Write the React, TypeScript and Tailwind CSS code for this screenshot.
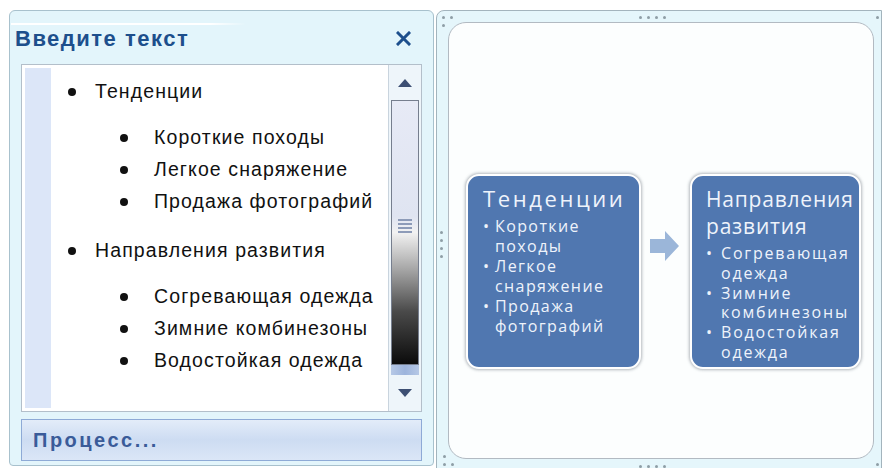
import type { ReactNode } from "react";

type Topic = { title: string; items: string[] };

const topics: Topic[] = [
  { title: "Тенденции", items: ["Короткие походы", "Легкое снаряжение", "Продажа фотографий"] },
  { title: "Направления развития", items: ["Согревающая одежда", "Зимние комбинезоны", "Водостойкая одежда"] },
];

const Dot = ({ className = "" }: { className?: string }) => (
  <span className={`absolute h-[3px] w-[3px] rounded-full bg-[#8e9ea6] ${className}`} />
);

const Bullet = () => <span className="h-[8px] w-[8px] shrink-0 rounded-full bg-[#111]" />;

const OutlineRow = ({ level, children }: { level: 0 | 1; children: ReactNode }) => (
  <div className={`flex h-[32px] items-center ${level === 0 ? "pl-[17px]" : "pl-[69px]"}`}>
    <Bullet />
    <span className={level === 0 ? "ml-[19px]" : "ml-[26px]"}>{children}</span>
  </div>
);

const ScrollBar = () => (
  <div className="flex w-[33px] shrink-0 flex-col border-l border-[#c9d4de] bg-[#eef5fa]">
    <div className="flex h-[35px] shrink-0 items-center justify-center">
      <svg width="14" height="8" viewBox="0 0 14 8">
        <path d="M0 8 L7 0 L14 8 Z" fill="#3d4f73" />
      </svg>
    </div>
    <div className="mx-[2px] flex h-[265px] shrink-0 flex-col items-center border border-[#767e8e] bg-[linear-gradient(to_bottom,#e7eaf6_0%,#dfe4f1_44%,#f2f2f2_50%,#a6a6a6_64%,#4a4a4a_80%,#0b0b0b_100%)]">
      <div className="mt-[118px] flex flex-col gap-[2px]">
        <span className="h-[2px] w-[14px] bg-[#8d9bb8]" />
        <span className="h-[2px] w-[14px] bg-[#8d9bb8]" />
        <span className="h-[2px] w-[14px] bg-[#8d9bb8]" />
        <span className="h-[2px] w-[14px] bg-[#8d9bb8]" />
      </div>
    </div>
    <div className="mx-[2px] h-[10px] shrink-0 bg-[linear-gradient(to_right,#b6c8e6,#9db4dc,#b6c8e6)]" />
    <div className="flex flex-1 items-center justify-center">
      <svg width="14" height="8" viewBox="0 0 14 8">
        <path d="M0 0 L14 0 L7 8 Z" fill="#3d4f73" />
      </svg>
    </div>
  </div>
);

const TextPane = () => (
  <div className="flex h-[456px] w-[425px] shrink-0 flex-col rounded-t-[6px] rounded-b-[4px] border border-[#a8c1cd] bg-[#e3f5fb]">
    <div className="relative flex h-[53px] shrink-0 items-center justify-between pl-[5px] pr-[22px] pt-[2px]">
      <span className="absolute left-[1px] top-[12px] h-[2px] w-[235px] bg-[linear-gradient(to_right,#ffffff_85%,rgba(255,255,255,0))]" />
      <span className="font-['Liberation_Sans',sans-serif] text-[22px] font-bold tracking-[1.5px] text-[#1d4f8c]">
        Введите текст
      </span>
      <svg width="15" height="15" viewBox="0 0 15 15">
        <path d="M2 2 L13 13 M13 2 L2 13" stroke="#1d4f8c" strokeWidth="3" strokeLinecap="square" />
      </svg>
    </div>
    <div className="mx-[11px] flex h-[348px] shrink-0 border border-[#b3bfca] bg-white">
      <div className="flex flex-1 p-[3px]">
        <div className="w-[26px] shrink-0 bg-[#dce6f8]" />
        <div className="flex-1 pt-[8px] font-['Liberation_Sans',sans-serif] text-[19.5px] tracking-[1.1px] text-[#111]">
          {topics.map((t, i) => (
            <div key={t.title} className={i === 0 ? "" : "mt-[17px]"}>
              <OutlineRow level={0}>{t.title}</OutlineRow>
              <div className="mt-[14px]">
                {t.items.map((item) => (
                  <OutlineRow key={item} level={1}>
                    {item}
                  </OutlineRow>
                ))}
              </div>
            </div>
          ))}
        </div>
      </div>
      <ScrollBar />
    </div>
    <div className="mx-[11px] mt-[7px] flex h-[42px] shrink-0 items-center border border-[#8eaad6] bg-[linear-gradient(to_bottom,#e3ecf9_0%,#cddcf2_50%,#dbe6f7_100%)] pl-[11px]">
      <span className="font-['Liberation_Sans',sans-serif] text-[20px] font-bold tracking-[2.5px] text-[#3a5b99]">
        Процесс...
      </span>
    </div>
  </div>
);

const ProcessBox = ({ topic, wide }: { topic: Topic; wide: boolean }) => (
  <div
    className={`flex h-[195px] flex-col rounded-[13px] border-2 border-white bg-[#5077b0] pt-[10px] font-['Open_Sans',sans-serif] text-[#eef3fb] shadow-[0_0_3px_1px_rgba(90,100,110,0.45)] ${
      wide ? "w-[175px] pl-[15px]" : "w-[171px] pl-[14px]"
    }`}
  >
    <div
      className={
        wide
          ? "text-[22px] leading-[24px] tracking-[2.6px]"
          : "text-[21px] leading-[27px] tracking-[0.8px]"
      }
    >
      {topic.title}
    </div>
    <div
      className={
        wide
          ? "mt-[6px] text-[16px] leading-[20px] tracking-[1.4px]"
          : "mt-[4px] text-[16px] leading-[19.8px] tracking-[1.8px]"
      }
    >
      {topic.items.map((item) => (
        <div key={item} className="flex">
          <span className={wide ? "w-[12px] shrink-0" : "w-[15px] shrink-0"}>•</span>
          <span>{item}</span>
        </div>
      ))}
    </div>
  </div>
);

const DiagramPane = () => (
  <div className="relative ml-[2px] flex h-[470px] flex-1 rounded-tl-[8px] border border-[#a3b4bd] bg-[#e5f6fb] pl-[11px] pt-[11px]">
    <Dot className="left-[5px] top-[5px]" />
    <Dot className="left-[13px] top-[5px]" />
    <Dot className="left-[5px] top-[13px]" />
    <Dot className="left-[202px] top-[5px]" />
    <Dot className="left-[210px] top-[5px]" />
    <Dot className="left-[218px] top-[5px]" />
    <Dot className="left-[226px] top-[5px]" />
    <Dot className="left-[439px] top-[5px]" />
    <Dot className="left-[3px] top-[220px]" />
    <Dot className="left-[3px] top-[228px]" />
    <Dot className="left-[3px] top-[236px]" />
    <Dot className="left-[3px] top-[244px]" />
    <Dot className="left-[6px] top-[444px]" />
    <Dot className="left-[6px] top-[452px]" />
    <Dot className="left-[14px] top-[452px]" />
    <Dot className="left-[202px] top-[454px]" />
    <Dot className="left-[210px] top-[454px]" />
    <Dot className="left-[218px] top-[454px]" />
    <Dot className="left-[226px] top-[454px]" />
    <Dot className="left-[439px] top-[452px]" />
    <div className="flex h-[437px] w-[426px] items-start rounded-[18px] border border-[#b2bac2] bg-[#fcfefe] pl-[17px] pt-[151px]">
      <ProcessBox topic={topics[0]} wide />
      <div className="ml-[9px] mr-[11px] mt-[57px]">
        <svg width="29" height="30" viewBox="0 0 29 30">
          <path d="M0 8 H15 V0 L29 15 L15 30 V22 H0 Z" fill="#9bb6d9" />
        </svg>
      </div>
      <ProcessBox topic={topics[1]} wide={false} />
    </div>
  </div>
);

export default function App() {
  return (
    <div className="flex h-[468px] w-[882px] overflow-hidden bg-white pl-[9px] pt-[10px]">
      <TextPane />
      <DiagramPane />
    </div>
  );
}
